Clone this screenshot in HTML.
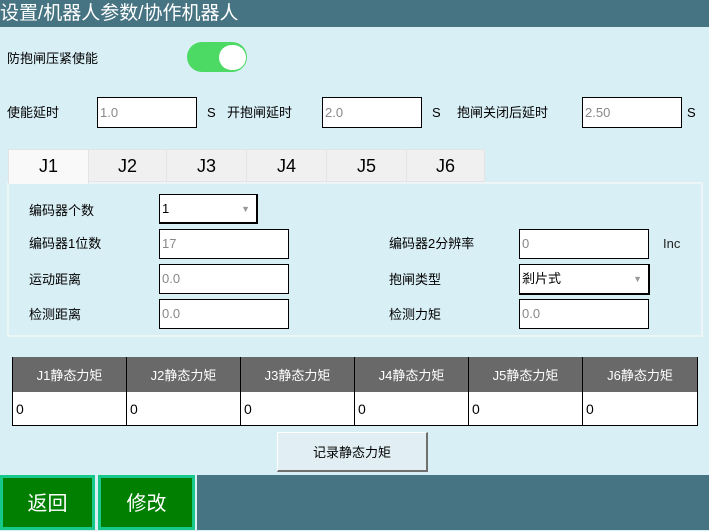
<!DOCTYPE html>
<html><head><meta charset="utf-8"><style>
*{box-sizing:border-box;margin:0;padding:0}
body{width:709px;height:530px;position:relative;overflow:hidden;background:#d9eff6;font-family:"Liberation Sans","Noto Sans CJK SC",sans-serif;font-size:13px;color:#000}
.a{position:absolute}
.t{position:absolute;white-space:nowrap;line-height:16px}
.in{position:absolute;background:#fff;border:1px solid #000;color:#888;font-size:13px;line-height:30px;padding-left:2px}
.tab{position:absolute;top:149px;height:33px;background:#f0f0f0;border:1px solid #e4e4e4;font-size:18px;text-align:center;line-height:33px}
.th{position:absolute;top:357px;height:35px;background:#696969;color:#fff;text-align:center;line-height:38px;border-right:1px solid #000}
.td{position:absolute;top:391px;height:34px;background:#fff;line-height:34px;padding-left:3px;border-right:1px solid #000;font-size:14px}
.btn{position:absolute;top:475px;height:55px;background:#007f00;border:3px solid #16c98a;color:#fff;font-size:20px;text-align:center;line-height:53px}
</style></head><body>
<div class="a" style="left:0;top:0;width:709px;height:27px;background:#477482"></div>
<div class="t" style="left:0;top:3px;color:#fff;font-size:19px;line-height:22px">设置/机器人参数/协作机器人</div>
<div class="t" style="left:7px;top:51px">防抱闸压紧使能</div>
<div class="a" style="left:187px;top:42px;width:60px;height:30px;border-radius:15px;background:#4cd964"></div>
<div class="a" style="left:219px;top:45px;width:27px;height:25px;border-radius:13px;background:#fff"></div>
<div class="t" style="left:7px;top:105px">使能延时</div>
<div class="in" style="left:97px;top:97px;width:100px;height:31px">1.0</div>
<div class="t" style="left:207px;top:105px">S</div>
<div class="t" style="left:227px;top:105px">开抱闸延时</div>
<div class="in" style="left:322px;top:97px;width:100px;height:31px">2.0</div>
<div class="t" style="left:432px;top:105px">S</div>
<div class="t" style="left:457px;top:105px">抱闸关闭后延时</div>
<div class="in" style="left:582px;top:97px;width:100px;height:31px">2.50</div>
<div class="t" style="left:687px;top:105px">S</div>

<div class="a" style="left:7px;top:182px;width:696px;height:155px;border:2px solid #eef5f7;background:#d9eff6"></div>
<div class="tab" style="left:8px;width:81px;background:#f9f9f9;border-bottom:none;height:35px">J1</div>
<div class="tab" style="left:88px;width:79px">J2</div>
<div class="tab" style="left:166px;width:81px">J3</div>
<div class="tab" style="left:246px;width:81px">J4</div>
<div class="tab" style="left:326px;width:81px">J5</div>
<div class="tab" style="left:406px;width:79px">J6</div>

<div class="t" style="left:29px;top:203px">编码器个数</div>
<div class="in" style="left:159px;top:194px;width:99px;height:30px;color:#000;line-height:28px;border-right:2px solid #000;border-bottom:2px solid #000"><span>1</span><span class="a" style="right:6px;top:0;color:#999;font-size:9px">▼</span></div>
<div class="t" style="left:29px;top:236px">编码器1位数</div>
<div class="in" style="left:159px;top:229px;width:130px;height:30px;line-height:28px">17</div>
<div class="t" style="left:389px;top:236px">编码器2分辨率</div>
<div class="in" style="left:519px;top:229px;width:130px;height:30px;line-height:28px">0</div>
<div class="t" style="left:663px;top:236px;color:#222">Inc</div>
<div class="t" style="left:29px;top:272px">运动距离</div>
<div class="in" style="left:159px;top:264px;width:130px;height:30px;line-height:28px">0.0</div>
<div class="t" style="left:389px;top:272px">抱闸类型</div>
<div class="in" style="left:519px;top:264px;width:131px;height:31px;color:#000;line-height:28px;border-right:2px solid #000;border-bottom:2px solid #000">剎片式<span class="a" style="right:6px;top:0;color:#999;font-size:9px">▼</span></div>
<div class="t" style="left:29px;top:307px">检测距离</div>
<div class="in" style="left:159px;top:299px;width:130px;height:30px;line-height:28px">0.0</div>
<div class="t" style="left:389px;top:307px">检测力矩</div>
<div class="in" style="left:519px;top:299px;width:130px;height:30px;line-height:28px">0.0</div>

<div class="a" style="left:12px;top:357px;width:686px;height:69px;border:1px solid #000;background:#000"></div>
<div class="th" style="left:13px;width:114px">J1静态力矩</div>
<div class="th" style="left:127px;width:114px">J2静态力矩</div>
<div class="th" style="left:241px;width:114px">J3静态力矩</div>
<div class="th" style="left:355px;width:114px">J4静态力矩</div>
<div class="th" style="left:469px;width:114px">J5静态力矩</div>
<div class="th" style="left:583px;width:114px;border-right:none">J6静态力矩</div>
<div class="td" style="left:13px;width:114px;top:392px;height:33px">0</div>
<div class="td" style="left:127px;width:114px;top:392px;height:33px">0</div>
<div class="td" style="left:241px;width:114px;top:392px;height:33px">0</div>
<div class="td" style="left:355px;width:114px;top:392px;height:33px">0</div>
<div class="td" style="left:469px;width:114px;top:392px;height:33px">0</div>
<div class="td" style="left:583px;width:114px;top:392px;height:33px;border-right:none">0</div>

<div class="a" style="left:277px;top:432px;width:151px;height:40px;background:#e1eff4;border:1px solid #fff;border-right:2px solid #707070;border-bottom:2px solid #707070;text-align:center;line-height:40px">记录静态力矩</div>

<div class="a" style="left:197px;top:475px;width:512px;height:55px;background:#477482"></div>
<div class="btn" style="left:0;width:95px">返回</div>
<div class="btn" style="left:98px;width:97px">修改</div>
</body></html>
